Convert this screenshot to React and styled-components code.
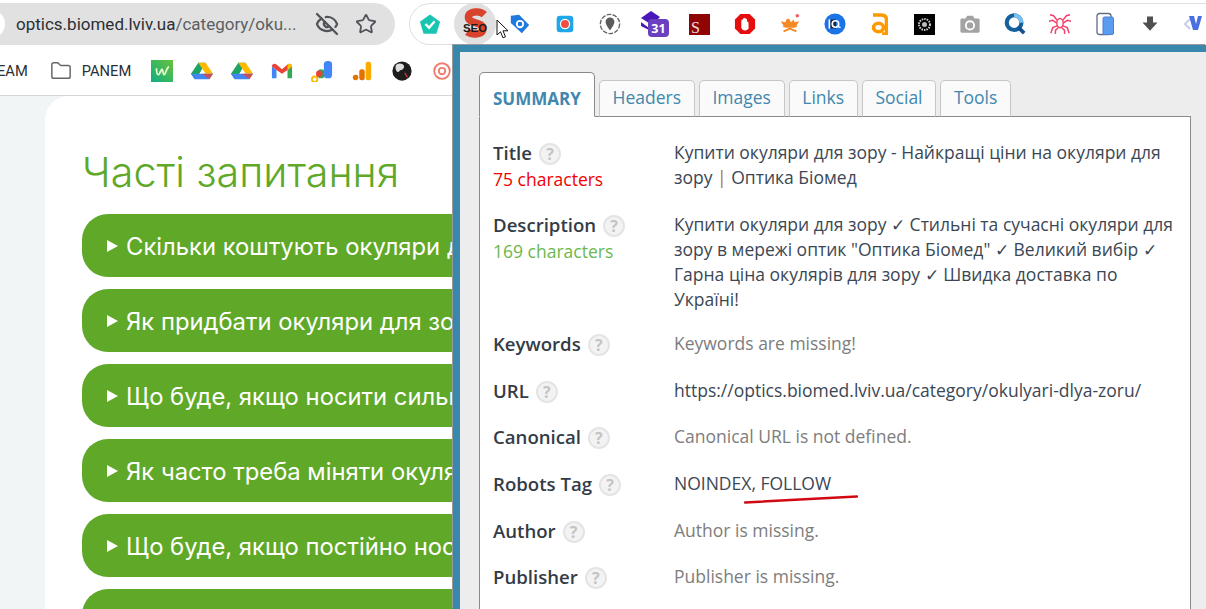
import styled, { createGlobalStyle } from 'styled-components'
import { EyeOff, Star, Folder } from 'lucide-react'

const Global = createGlobalStyle`
  html, body {
    margin: 0;
    padding: 0;
    background: #fff;
    overflow: hidden;
  }
`

const Screen = styled.div`
  position: relative;
  width: 1206px;
  height: 609px;
  overflow: hidden;
  display: flex;
  flex-direction: column;
  font-family: 'Open Sans', sans-serif;
`

const TopRow = styled.div`
  display: flex;
  height: 46px;
  padding-top: 3px;
  box-sizing: border-box;
  flex: none;
`

const AddressBar = styled.div`
  position: relative;
  width: 395px;
  height: 42px;
  flex: none;
  background: #e1e1e1;
  border-radius: 0 21px 21px 0;
  display: flex;
  align-items: center;
  padding-left: 16px;
  box-sizing: border-box;
  font-family: Roboto, sans-serif;
  font-size: 17px;
  color: #2c2f33;
  &::before {
    content: '';
    position: absolute;
    left: -27px;
    top: 7px;
    width: 32px;
    height: 28px;
    border-radius: 14px;
    background: #fff;
  }
`

const UrlPath = styled.span`
  color: #5c6064;
`

const AddressIcons = styled.div`
  display: flex;
  align-items: center;
  gap: 16px;
  margin-left: 18px;
  color: #50545a;
`

const ExtPill = styled.div`
  margin-left: 14px;
  flex: 1;
  height: 42px;
  border: 1px solid #e0e0e0;
  border-right: 0;
  border-radius: 21px 0 0 21px;
  display: flex;
  align-items: center;
  box-sizing: border-box;
  overflow: hidden;
`

const ExtButton = styled.div`
  width: 42px;
  height: 42px;
  margin: 0 1.5px;
  flex: none;
  display: flex;
  align-items: center;
  justify-content: center;
  border-radius: 50%;
  background: ${(p) => (p.$active ? '#e0e0e0' : 'transparent')};
  &:first-child {
    margin-left: -1.5px;
  }
`

const Cursor = styled.svg`
  position: absolute;
  left: 496px;
  top: 19px;
`

const BookmarkRow = styled.div`
  height: 50px;
  flex: none;
  box-sizing: border-box;
  border-bottom: 1px solid #d6d6d6;
  display: flex;
  align-items: center;
  font-family: Roboto, sans-serif;
  font-size: 14.7px;
  color: #2c2f33;
`

const BookmarkLabel = styled.span`
  margin-left: ${(p) => p.$left || 0}px;
`

const BookmarkIcon = styled.div`
  width: 40px;
  flex: none;
  display: flex;
  justify-content: center;
`

const BookmarkIcons = styled.div`
  display: flex;
  margin-left: 11px;
`

const Page = styled.div`
  flex: 1;
  background: #f1f5f6;
  padding-left: 45px;
  display: flex;
`

const Card = styled.div`
  flex: 1;
  background: #fff;
  border-radius: 24px 0 0 0;
  padding: 50px 0 0 37px;
  overflow: hidden;
`

const Heading = styled.h1`
  margin: 0 0 16px 0;
  font-family: Inter, sans-serif;
  font-weight: 300;
  font-size: 41.3px;
  line-height: 52px;
  color: #5fa828;
`

const FaqList = styled.div`
  display: flex;
  flex-direction: column;
  gap: 12px;
`

const FaqItem = styled.div`
  height: 63px;
  flex: none;
  width: 500px;
  box-sizing: border-box;
  background: #5fa828;
  border-radius: 26px;
  display: flex;
  align-items: center;
  padding: 1px 0 0 25px;
  font-family: Inter, sans-serif;
  font-size: 23.8px;
  color: #fff;
  white-space: nowrap;
  &::before {
    content: '';
    border-left: 11px solid #fff;
    border-top: 6px solid transparent;
    border-bottom: 6px solid transparent;
    margin-right: 8px;
  }
`

const Panel = styled.div`
  position: absolute;
  left: 453px;
  top: 45px;
  right: 0;
  bottom: 0;
  box-sizing: border-box;
  background: #ededed;
  border-top: 7px solid #3a87ad;
  border-left: 7px solid #3a87ad;
  box-shadow: -1px -1px 0 #9a9a9a;
  padding: 20px 15px 0 19px;
  color: #3b4754;
  font-size: 17.5px;
  line-height: 25px;
`

const Tabs = styled.div`
  display: flex;
  align-items: flex-end;
  gap: 4px;
  margin-bottom: -1px;
  position: relative;
  z-index: 1;
`

const Tab = styled.div`
  box-sizing: border-box;
  height: ${(p) => (p.$active ? 45 : 37)}px;
  padding: ${(p) => (p.$active ? '13px 13px 0' : '4px 12.7px 0')};
  border: 1px solid ${(p) => (p.$active ? '#8a8a8a' : '#c6c6c6')};
  border-bottom: ${(p) => (p.$active ? '1px solid #fff' : '1px solid #8a8a8a')};
  border-radius: 5px 5px 0 0;
  background: ${(p) => (p.$active ? '#fff' : '#fafafa')};
  color: #3f87af;
  font-size: ${(p) => (p.$active ? 17 : 17.5)}px;
  font-weight: ${(p) => (p.$active ? 700 : 400)};
`

const Content = styled.div`
  background: #fff;
  border: 1px solid #8a8a8a;
  height: 600px;
  padding: 23px 15px 0 13px;
  box-sizing: border-box;
`

const Row = styled.div`
  display: grid;
  grid-template-columns: 181px 1fr;
  margin-bottom: ${(p) => p.$gap || 21.6}px;
`

const Label = styled.div`
  display: flex;
  align-items: center;
  height: 25px;
  font-size: 18.6px;
  font-weight: 600;
  color: #333c46;
`

const Help = styled.span`
  display: inline-flex;
  flex: none;
  align-items: center;
  justify-content: center;
  width: 22px;
  height: 22px;
  box-sizing: border-box;
  margin: 3px 0 0 7px;
  border-radius: 50%;
  border: 2px solid #e4e4e4;
  background: #f3f3f3;
  color: #c4c4c4;
  font-size: 16px;
  font-weight: 700;
  line-height: 1;
`

const Count = styled.div`
  margin-top: 2px;
  color: ${(p) => p.$color};
`

const Value = styled.div`
  position: relative;
  color: ${(p) => (p.$muted ? '#7d7d7d' : '#3b4754')};
`

const Pipe = styled.span`
  color: #b0702c;
`

const Tick = styled.span`
  font-size: 16.5px;
  line-height: 0;
`

const Scribble = styled.svg`
  position: absolute;
  left: 70px;
  top: 24px;
`

const Keep = ({ children, size = 22 }) => (
  <svg width={size} height={size} viewBox="0 0 24 24">
    {children}
  </svg>
)

const extensions = [
  <Keep key="a">
    <path d="M12 1.5 23 9.5l-4 13H5l-4-13z" fill="#18c5b0" />
    <path d="M7 12l4 4 6-7" fill="none" stroke="#fff" strokeWidth="2.6" />
  </Keep>,
  <Keep key="seo" size={32}>
    <path d="M19 5c-3-3-12-3-12 2 0 5 11 3 11 8.500 0 4.500-8 5-12 2.500" fill="none" stroke="#d8432e" strokeWidth="5.500" />
    <text x="12" y="18" textAnchor="middle" fontFamily="Liberation Sans, sans-serif" fontWeight="700" fontSize="8.500" fill="#1a1a1a">SEO</text>
  </Keep>,
  <Keep key="tag">
    <path d="M2 3l9-1 11 11-8 9L2 11z" fill="#1f7ae0" />
    <circle cx="12" cy="12" r="4.500" fill="#fff" />
    <circle cx="12" cy="12" r="2.500" fill="#1f7ae0" />
  </Keep>,
  <Keep key="rec" size={20}>
    <rect x="2" y="2" width="20" height="20" rx="4" fill="#1ea7e8" />
    <circle cx="12" cy="12" r="5.500" fill="#f04e3e" stroke="#fff" strokeWidth="1.500" />
  </Keep>,
  <Keep key="pin">
    <circle cx="12" cy="12" r="10.500" fill="none" stroke="#666" strokeWidth="1.500" strokeDasharray="5 1.500" />
    <path d="M12 5a4.800 4.800 0 0 1 4.800 4.800C16.800 13 12 19 12 19S7.200 13 7.200 9.800A4.800 4.800 0 0 1 12 5z" fill="#5b5b5b" />
  </Keep>,
  <svg key="cal" width="30" height="30" viewBox="0 0 30 30">
    <path d="M1 9 11 2l9 6-8 8z" fill="#4a17b8" />
    <path d="M1 13l8 6 4-2v6L1 17z" fill="#4a17b8" />
    <rect x="8" y="10" width="21" height="18" rx="4" fill="#6a3fc0" />
    <text x="18.500" y="24" textAnchor="middle" fontFamily="Open Sans, sans-serif" fontWeight="700" fontSize="12.500" fill="#fff">31</text>
  </svg>,
  <svg key="s" width="21" height="21" viewBox="0 0 21 21">
    <rect x="0" y="0" width="21" height="21" fill="#8f0505" />
    <text x="2" y="19" fontFamily="Liberation Serif, serif" fontSize="16" fill="#f1dede">S</text>
  </svg>,
  <Keep key="stop">
    <path d="M7 1h10l6 6v10l-6 6H7l-6-6V7z" fill="#e50d0d" />
    <path d="M8 13V8c0-1 1.500-1 1.500 0V6.500c0-1 1.500-1 1.500 0V6c0-1 1.700-1 1.700 0v1c0-1 1.500-1 1.500 0v3c0-1 1.500-.8 1.500.2L16 16c-.3 2-2 3-4 3-2.500 0-3-1-4-3z" fill="#fff" />
  </Keep>,
  <Keep key="leaf">
    <path d="M11 6l2 4 3-3 1 3 5-1-3 5 1 1-4 1H8l-4-1 1-1-3-5 5 1 1-3z" fill="#f58a24" />
    <path d="M5 20l7-3 7 3" fill="none" stroke="#f58a24" strokeWidth="2" />
    <circle cx="20" cy="3" r="2" fill="#f0616d" />
  </Keep>,
  <Keep key="iq">
    <circle cx="12" cy="12" r="11.500" fill="#1b73e8" />
    <rect x="5" y="7" width="2" height="10" fill="#fff" />
    <path d="M7 7h6v10H7z" fill="#16243c" />
    <circle cx="12.500" cy="12" r="3.500" fill="none" stroke="#fff" strokeWidth="1.800" />
    <path d="M15 14.500l3 1.500" stroke="#fff" strokeWidth="1.500" />
  </Keep>,
  <svg key="am" width="17" height="22" viewBox="0 0 17 22">
    <path d="M2 2h8c4 0 5.500 2 5.500 5v14h-4.500" fill="none" stroke="#ff9900" strokeWidth="3.600" />
    <ellipse cx="7.500" cy="14.500" rx="5" ry="4.200" fill="none" stroke="#ff9900" strokeWidth="3.600" />
  </svg>,
  <svg key="blk" width="21" height="21" viewBox="0 0 21 21">
    <rect width="21" height="21" fill="#000" />
    <circle cx="10.500" cy="10.500" r="5.500" fill="none" stroke="#ccc" strokeWidth="2" strokeDasharray="1.500 1" />
    <circle cx="10.500" cy="10.500" r="2.500" fill="#bbb" />
  </svg>,
  <Keep key="cam">
    <path d="M3 6h4l2-3h6l2 3h4a1.500 1.500 0 0 1 1.500 1.500V20a1.500 1.500 0 0 1-1.500 1.500H3A1.500 1.500 0 0 1 1.500 20V7.500A1.500 1.500 0 0 1 3 6z" fill="#a3a3a3" />
    <circle cx="12" cy="13.500" r="4.500" fill="none" stroke="#fff" strokeWidth="2" />
  </Keep>,
  <Keep key="q">
    <circle cx="11" cy="10.500" r="8" fill="none" stroke="#15609f" strokeWidth="4.500" />
    <path d="M11 2.500a8 8 0 0 1 8 8" fill="none" stroke="#7cc0ee" strokeWidth="4.500" />
    <path d="M16 16l6 6" stroke="#15508a" strokeWidth="4" />
  </Keep>,
  <Keep key="sp">
    <g fill="none" stroke="#f5416c" strokeWidth="1.600">
      <ellipse cx="12" cy="11" rx="3.500" ry="5" />
      <path d="M9 8 5 3 1 2M15 8l4-5 4-1M8.500 11 4 8 0 9M15.500 11 20 8l4 1M9 14l-5 2-2 6M15 14l5 2 2 6M10 16l-3 3v4M14 16l3 3v4" />
    </g>
  </Keep>,
  <Keep key="ph" size={24}>
    <rect x="4" y="1.500" width="14" height="21" rx="2.500" fill="#fff" stroke="#5f6c85" strokeWidth="1.300" />
    <rect x="10" y="5" width="10.500" height="17.500" rx="1.500" fill="#5b9cf0" stroke="#4d7ecb" />
  </Keep>,
  <Keep key="dn" size={18}>
    <path d="M8 2h8v8h6L12 21 2 10h6z" fill="#505050" />
  </Keep>,
  <Keep key="v" size={24}>
    <path d="M7 7l-5 5 5 5" fill="none" stroke="#c3cfe8" strokeWidth="2" />
    <path d="M6 4h5l2 8 2-8h4l-4 14h-5z" fill="#4a6fe3" />
  </Keep>,
]

const bookmarks = [
  <Keep key="w">
    <defs>
      <linearGradient id="wGrad" x1="0" y1="1" x2="1" y2="0">
        <stop offset="0" stopColor="#0fae83" />
        <stop offset="1" stopColor="#68c13a" />
      </linearGradient>
    </defs>
    <rect width="24" height="24" fill="url(#wGrad)" />
    <path d="M6 9c0 3 .5 7 2 7s3-6 4-6 1 6 2.500 6 2-7 5-9" fill="none" stroke="#e4f8c8" strokeWidth="2" />
  </Keep>,
  <Keep key="d1">
    <path d="M8 3h8L8 17 4 21 0 15z" fill="#1ea362" />
    <path d="M16 3l8 12h-8L8 3z" fill="#ffba00" />
    <path d="M0 15h24l-4 6H4z" fill="#4285f4" />
    <path d="M12 15h12l-4 6z" fill="#e94235" opacity=".8" />
  </Keep>,
  <Keep key="d2">
    <path d="M8 3h8L8 17 4 21 0 15z" fill="#1ea362" />
    <path d="M16 3l8 12h-8L8 3z" fill="#ffba00" />
    <path d="M0 15h24l-4 6H4z" fill="#4285f4" />
    <path d="M12 15h12l-4 6z" fill="#e94235" opacity=".8" />
  </Keep>,
  <Keep key="m">
    <path d="M1 20V7l5 4v9z" fill="#4285f4" />
    <path d="M23 20V7l-5 4v9z" fill="#34a853" />
    <path d="M1 7c0-3 3-4 5-2l6 5 6-5c2-2 5-1 5 2l-5 4-6 4-6-4z" fill="#ea4335" />
    <path d="M18 5c2-2 5-1 5 2l-5 4z" fill="#fbbc04" />
  </Keep>,
  <Keep key="ads">
    <circle cx="4" cy="21" r="3" fill="none" stroke="#fbbc04" strokeWidth="2" />
    <path d="M5 18l4-4 1 4z" fill="#fbbc04" />
    <rect x="7" y="10" width="8" height="10" rx="4" fill="#34a853" />
    <rect x="14" y="1" width="9" height="19" rx="4" fill="#4285f4" />
    <circle cx="9" cy="15" r="3.500" fill="#ea4335" />
  </Keep>,
  <Keep key="ga">
    <rect x="16" y="2" width="6" height="20" rx="2.500" fill="#f9ab00" />
    <rect x="9" y="10" width="6" height="12" rx="2.500" fill="#e37400" />
    <circle cx="5" cy="19" r="3" fill="#e37400" />
  </Keep>,
  <Keep key="gl">
    <circle cx="12" cy="12" r="10.500" fill="#1d1d1d" />
    <path d="M6 5c3-2 7-1 8 1s-1 5-3 5-2 3-4 2-3-6-1-8z" fill="#ddd" />
    <path d="M15 14l3 5" stroke="#c33" strokeWidth="1.500" />
  </Keep>,
  <Keep key="at">
    <circle cx="12" cy="12" r="8.500" fill="none" stroke="#ef7b6f" strokeWidth="2" />
    <circle cx="12" cy="12" r="3.500" fill="none" stroke="#ef7b6f" strokeWidth="2" />
  </Keep>,
]

const faqs = [
  'Скільки коштують окуляри для зору?',
  'Як придбати окуляри для зору?',
  'Що буде, якщо носити сильні окуляри?',
  'Як часто треба міняти окуляри?',
  'Що буде, якщо постійно носити окуляри?',
  '',
]

const tabs = ['Headers', 'Images', 'Links', 'Social', 'Tools']

export default function App() {
  return (
    <>
      <Global />
      <Screen>
        <TopRow>
          <AddressBar>
            <span>
              optics.biomed.lviv.ua<UrlPath>/category/oku...</UrlPath>
            </span>
            <AddressIcons>
              <EyeOff size={24} strokeWidth={2.3} />
              <Star size={22} strokeWidth={2} />
            </AddressIcons>
          </AddressBar>
          <ExtPill>
            {extensions.map((icon, i) => (
              <ExtButton key={i} $active={i === 1}>
                {icon}
              </ExtButton>
            ))}
          </ExtPill>
        </TopRow>
        <BookmarkRow>
          <BookmarkLabel $left={-3}>EAM</BookmarkLabel>
          <BookmarkLabel $left={22}>
            <Folder size={22} strokeWidth={1.6} color="#666" style={{ verticalAlign: 'middle' }} />
          </BookmarkLabel>
          <BookmarkLabel $left={10}>PANEM</BookmarkLabel>
          <BookmarkIcons>
            {bookmarks.map((icon, i) => (
              <BookmarkIcon key={i}>{icon}</BookmarkIcon>
            ))}
          </BookmarkIcons>
        </BookmarkRow>
        <Page>
          <Card>
            <Heading>Часті запитання</Heading>
            <FaqList>
              {faqs.map((q, i) => (
                <FaqItem key={i}>{q}</FaqItem>
              ))}
            </FaqList>
          </Card>
        </Page>

        <Panel>
          <Tabs>
            <Tab $active>SUMMARY</Tab>
            {tabs.map((t) => (
              <Tab key={t}>{t}</Tab>
            ))}
          </Tabs>
          <Content>
            <Row $gap={19.6}>
              <div>
                <Label>
                  Title<Help>?</Help>
                </Label>
                <Count $color="#f00000">75 characters</Count>
              </div>
              <Value>
                Купити окуляри для зору - Найкращі ціни на окуляри для зору <Pipe>|</Pipe> Оптика Біомед
              </Value>
            </Row>
            <Row $gap={19.6}>
              <div>
                <Label>
                  Description<Help>?</Help>
                </Label>
                <Count $color="#6cb84c">169 characters</Count>
              </div>
              <Value>
                Купити окуляри для зору <Tick>✓</Tick> Стильні та сучасні окуляри для зору в мережі оптик "Оптика Біомед" <Tick>✓</Tick> Великий вибір <Tick>✓</Tick> Гарна ціна окулярів для зору <Tick>✓</Tick> Швидка доставка по Україні!
              </Value>
            </Row>
            <Row>
              <Label>
                Keywords<Help>?</Help>
              </Label>
              <Value $muted>Keywords are missing!</Value>
            </Row>
            <Row>
              <Label>
                URL<Help>?</Help>
              </Label>
              <Value>https://optics.biomed.lviv.ua/category/okulyari-dlya-zoru/</Value>
            </Row>
            <Row>
              <Label>
                Canonical<Help>?</Help>
              </Label>
              <Value $muted>Canonical URL is not defined.</Value>
            </Row>
            <Row>
              <Label>
                Robots Tag<Help>?</Help>
              </Label>
              <Value>
                NOINDEX, FOLLOW
                <Scribble width="114" height="10" viewBox="0 0 114 10">
                  <path d="M1 7.500 113 1.500" stroke="#d10a11" strokeWidth="2.500" strokeLinecap="round" fill="none" />
                </Scribble>
              </Value>
            </Row>
            <Row>
              <Label>
                Author<Help>?</Help>
              </Label>
              <Value $muted>Author is missing.</Value>
            </Row>
            <Row>
              <Label>
                Publisher<Help>?</Help>
              </Label>
              <Value $muted>Publisher is missing.</Value>
            </Row>
          </Content>
        </Panel>

        <Cursor width="13" height="20" viewBox="0 0 13 20">
          <path d="M1 1v15l3.500-3.200 2.500 6 2.500-1-2.500-6H12z" fill="#fff" stroke="#111" strokeWidth="1" />
        </Cursor>
      </Screen>
    </>
  )
}
